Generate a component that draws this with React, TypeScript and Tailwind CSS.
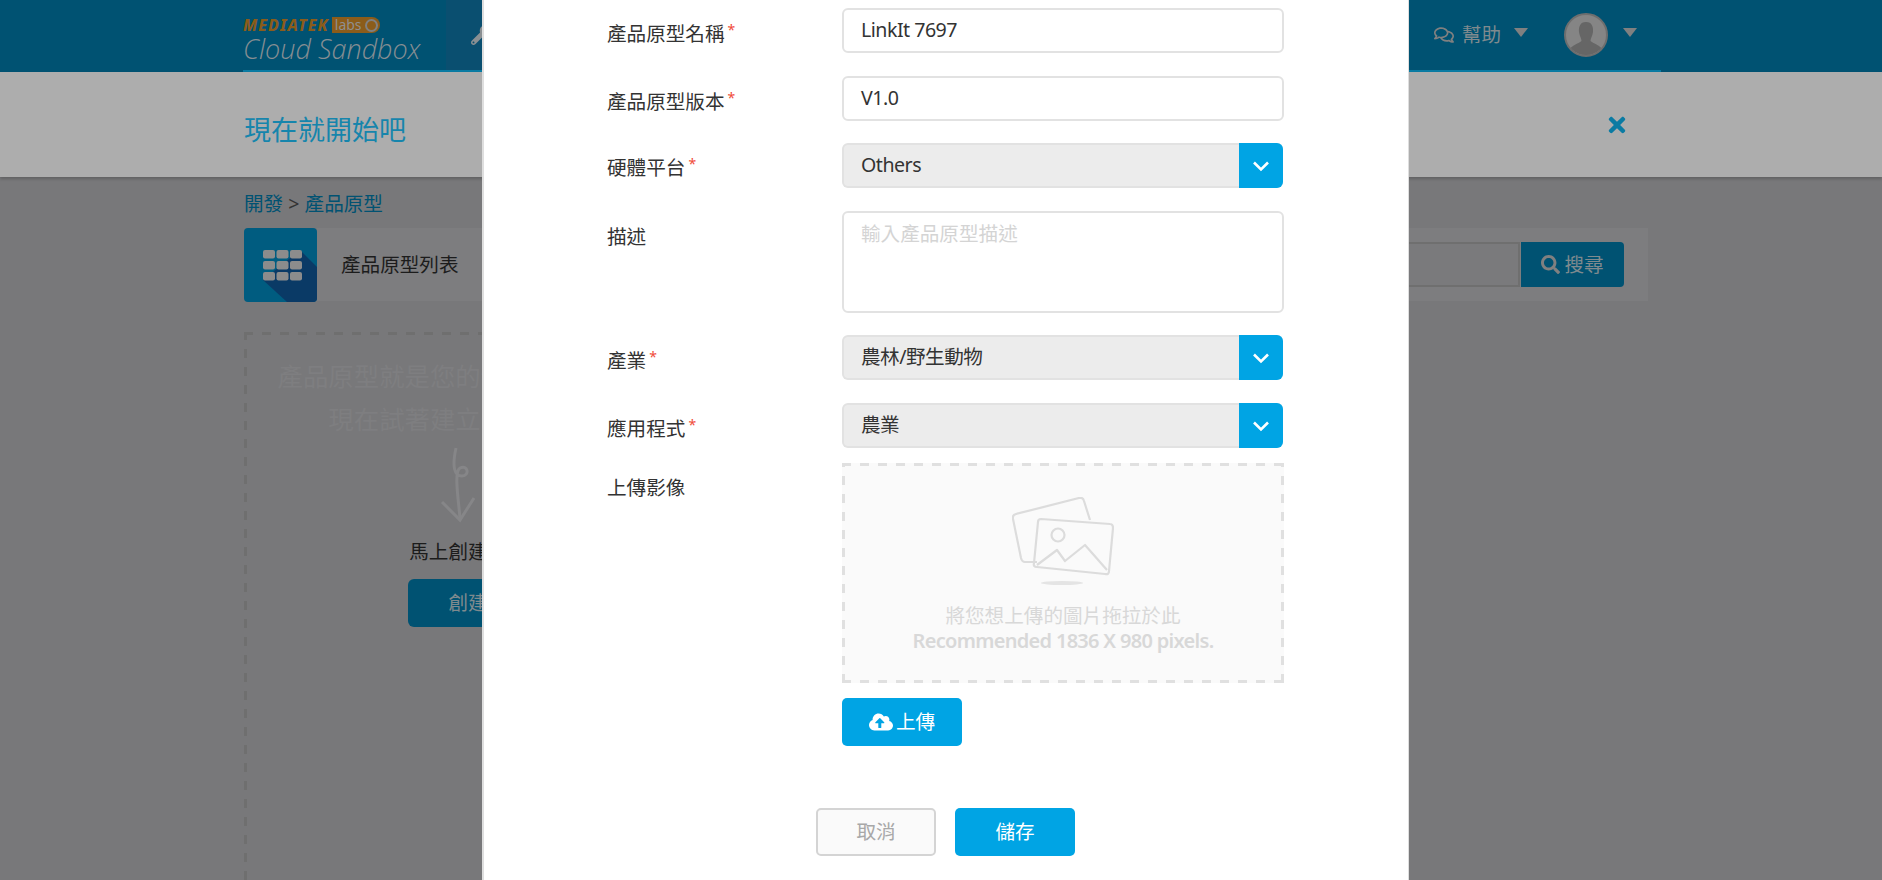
import { ReactNode } from "react";
import { FaCloudUploadAlt, FaRegComments, FaSearch, FaTimes, FaWrench } from "react-icons/fa";

const cjk = "font-['Noto_Sans','Noto_Sans_CJK_TC',sans-serif]";

// 3px strokes with a 9px dash, drawn on all four sides
const dashLight =
  "bg-no-repeat [background-image:repeating-linear-gradient(90deg,#e0e0e0_0_9px,transparent_9px_18px),repeating-linear-gradient(90deg,#e0e0e0_0_9px,transparent_9px_18px),repeating-linear-gradient(0deg,#e0e0e0_0_9px,transparent_9px_18px),repeating-linear-gradient(0deg,#e0e0e0_0_9px,transparent_9px_18px)] [background-size:100%_3px,100%_3px,3px_100%,3px_100%] [background-position:0_0,0_100%,0_0,100%_0]";
const dashDark =
  "bg-no-repeat [background-image:repeating-linear-gradient(90deg,#6f6f6f_0_9px,transparent_9px_18px),repeating-linear-gradient(0deg,#6f6f6f_0_9px,transparent_9px_18px)] [background-size:100%_3px,3px_100%] [background-position:0_0,0_0]";

function Caret() {
  return <span className="h-0 w-0 border-x-[7px] border-t-[9px] border-x-transparent border-t-[#808080]" />;
}

function Row({ label, required, top = "pt-[14px]", children }: { label: string; required?: boolean; top?: string; children: ReactNode }) {
  return (
    <div className="flex">
      <div className={`w-[235px] shrink-0 text-[19.6px] leading-[30px] text-[#333] ${top}`}>
        {label}
        {required && <span className="relative -top-[6px] ml-[3px] text-[14px] leading-[14px] text-[#f04b3a]">*</span>}
      </div>
      <div className="w-[442px]">{children}</div>
    </div>
  );
}

function TextField({ value }: { value: string }) {
  return (
    <div className="flex h-[45px] items-center rounded-[6px] border-2 border-[#e2e2e2] bg-white px-[17px] pb-[2px] text-[19.6px] tracking-[-0.5px] text-[#333]">
      {value}
    </div>
  );
}

function SelectField({ value }: { value: string }) {
  return (
    <div className="mr-[1px] flex h-[45px] items-stretch overflow-hidden rounded-[6px] bg-[#ececec] text-[19.6px] tracking-[-0.5px] text-[#333]">
      <div className="flex flex-1 items-center rounded-l-[6px] border-2 border-r-0 border-[#e2e2e2] px-[17px] pb-[2px]">{value}</div>
      <div className="flex w-[44px] items-center justify-center bg-[#00a4e4]">
        <svg width="18" height="12" viewBox="0 0 18 12" fill="none">
          <path d="M2 2.5 L9 9.5 L16 2.5" stroke="#fff" strokeWidth="2.6" />
        </svg>
      </div>
    </div>
  );
}

function PhotoIcon() {
  return (
    <svg width="102" height="90" viewBox="0 0 102 90" fill="none" stroke="#dcdcdc" strokeWidth="2.2" strokeLinejoin="round">
      <path d="M25 65 L13 65 Q10 65 9 61 L1 22 Q0 18 4 17 L67 1 Q71 0 72 4 L78 23" />
      <path d="M29 22 L98 27 Q101 27 101 31 L97 74 Q97 78 93 77 L25 70 Q21 70 22 66 L26 25 Q26 22 29 22 Z" />
      <circle cx="46" cy="38" r="6.5" />
      <path d="M25 68 L45 53 L53 64 L73 48 L95 73" />
      <ellipse cx="50" cy="86" rx="21" ry="2" fill="#e4e4e4" stroke="none" />
    </svg>
  );
}

function GridBadge() {
  return (
    <svg className="shrink-0" width="73" height="74" viewBox="0 0 73 74">
      <rect width="73" height="74" rx="4" fill="#005c80" />
      <path d="M56 22 L73 39 L73 70 Q73 74 69 74 L43 74 L19 52 Z" fill="#0a3a66" />
      {[19, 32.5, 46].map((x) =>
        [22, 33, 44].map((y) => <rect key={`${x}-${y}`} x={x} y={y} width="12" height="8.5" rx="2" fill="#8c8c8c" />),
      )}
    </svg>
  );
}

function Backdrop() {
  return (
    <div className="flex h-full flex-col bg-[#78787a]">
      <header className="h-[72px] shrink-0 bg-[#005272]">
        <div className="ml-[243px] flex h-[72px] w-[1418px] items-stretch border-b-2 border-[#0a7ba3]">
          <div className="flex w-[203px] flex-col pt-[17px]">
            <div className="flex h-[16px] items-center">
              <span className="text-[16px] leading-[16px] font-extrabold italic tracking-[1px] text-[#8b5c1a]">MEDIATEK</span>
              <span className="ml-[3px] flex h-[16px] items-center rounded-l-[2px] rounded-r-full bg-[#8b5c1a] pr-[2px] pl-[3px] text-[14px] leading-[16px] text-[#8f8f8f]">
                labs
                <span className="ml-[3px] h-[13px] w-[13px] rounded-full border-2 border-[#808080]" />
              </span>
            </div>
            <span className="font-['Open_Sans',sans-serif] text-[27px] leading-[31px] font-light italic text-[#868e92]">Cloud Sandbox</span>
          </div>
          <div className="flex w-[300px] items-center bg-[#0a4f70] pl-[25px]">
            <FaWrench className="text-[20px] text-[#8a8f92]" />
          </div>
          <div className="ml-auto flex items-center pr-[24px] text-[19.6px] text-[#7f8a8e]">
            <FaRegComments className="mr-[8px] text-[20px] text-[#808080]" />
            幫助
            <span className="mr-[36px] ml-[13px] -mt-[6px] flex"><Caret /></span>
            <div className="flex h-[44px] w-[44px] items-end justify-center overflow-hidden rounded-full border-2 border-[#6e6e6e] bg-[#858585]">
              <svg width="40" height="36" viewBox="0 0 40 36" fill="#666">
                <path d="M20 3 C26 3 27.5 8 27 13 C26.5 17 24.5 19 24.5 22 C28 25 34 26 37 31 L37 36 L3 36 L3 31 C6 26 12 25 15.5 22 C15.5 19 13.5 17 13 13 C12.5 8 14 3 20 3 Z" />
              </svg>
            </div>
            <span className="ml-[15px] -mt-[6px] flex"><Caret /></span>
          </div>
        </div>
      </header>

      <div className="flex h-[105px] shrink-0 items-center justify-between bg-[#adadad] pt-[10px] pr-[253px] pl-[244px] shadow-[0_2px_3px_rgba(0,0,0,0.2)]">
        <h1 className="text-[27px] leading-[34px] font-normal text-[#1685ac]">現在就開始吧</h1>
        <FaTimes className="-mt-[10px] text-[24px] text-[#0a7ba3]" />
      </div>

      <div className="flex flex-1 flex-col overflow-hidden pl-[244px]">
        <div className="mt-[13px] text-[19.6px] leading-[28px] text-[#333]">
          <span className="text-[#005272]">開發</span> &gt; <span className="text-[#005272]">產品原型</span>
        </div>
        <div className="mt-[10px] flex h-[73px] w-[1404px] items-stretch">
          <GridBadge />
          <div className="flex flex-1 items-center bg-[#7d7d7f] pr-[24px] pl-[24px]">
            <span className="text-[19.6px] text-[#1c1c1c]">產品原型列表</span>
            <div className="ml-auto flex h-[45px]">
              <div className="w-[200px] border-2 border-[#6f6f6f] bg-[#7a7a7c]" />
              <div className="ml-[1px] flex w-[103px] items-center justify-center gap-[4px] rounded-r-[4px] bg-[#005272] text-[19.6px] text-[#7f8a8e]">
                <FaSearch className="text-[19px] text-[#808080]" />
                搜尋
              </div>
            </div>
          </div>
        </div>

        <div className={`mt-[31px] flex w-[448px] flex-1 flex-col items-center pt-[23px] text-center ${dashDark}`}>
          <p className="text-[25.4px] leading-[43px] whitespace-nowrap text-[#7e7e80]">產品原型就是您的物聯網裝置專案</p>
          <p className="text-[25.4px] leading-[43px] whitespace-nowrap text-[#7e7e80]">現在試著建立一個原型！</p>
          <svg className="mt-[5px]" width="60" height="78" viewBox="0 0 60 78" fill="none" stroke="#868688" strokeWidth="3">
            <path d="M18 2 C14 20 16 30 24 30 C32 30 30 18 22 22 C16 26 20 50 22 72" />
            <path d="M4 56 L22 74 L36 52" />
          </svg>
          <p className="mt-[13px] text-[19.6px] leading-[30px] text-[#1c1c1c]">馬上創建原型</p>
          <div className="mt-[12px] flex h-[48px] w-[120px] items-center justify-center rounded-[6px] bg-[#005272] text-[19.6px] text-[#7f8a8e]">
            創建
          </div>
        </div>
      </div>
    </div>
  );
}

function Modal() {
  return (
    <div className="absolute inset-0 flex justify-center overflow-hidden pl-[9px]">
      <div className="flex h-full w-[927px] flex-col border-r border-l-2 border-[#dedede] bg-white pt-[8px] pl-[123px]">
        <Row label="產品原型名稱" required top="pt-[11px]">
          <TextField value="LinkIt 7697" />
        </Row>
        <div className="mt-[23px]">
          <Row label="產品原型版本" required top="pt-[11px]">
            <TextField value="V1.0" />
          </Row>
        </div>
        <div className="mt-[22px]">
          <Row label="硬體平台" required top="pt-[10px]">
            <SelectField value="Others" />
          </Row>
        </div>
        <div className="mt-[23px]">
          <Row label="描述" top="pt-[11px]">
            <div className="h-[102px] rounded-[6px] border-2 border-[#e2e2e2] bg-white px-[17px] pt-[6px] text-[19.6px] leading-[30px] text-[#d4d4d4]">
              輸入產品原型描述
            </div>
          </Row>
        </div>
        <div className="mt-[22px]">
          <Row label="產業" required top="pt-[11px]">
            <SelectField value="農林/野生動物" />
          </Row>
        </div>
        <div className="mt-[23px]">
          <Row label="應用程式" required top="pt-[11px]">
            <SelectField value="農業" />
          </Row>
        </div>
        <div className="mt-[15px]">
          <Row label="上傳影像" top="pt-[10px]">
            <div className={`flex h-[220px] flex-col items-center bg-[#fafafa] pt-[34px] ${dashLight}`}>
              <PhotoIcon />
              <p className="mt-[16px] text-[19.6px] leading-[26px] text-[#d8d8d8]">將您想上傳的圖片拖拉於此</p>
              <p className="text-[20px] leading-[24px] font-semibold tracking-[-0.7px] text-[#d8d8d8]">Recommended 1836 X 980 pixels.</p>
            </div>
            <button className="mt-[15px] flex h-[48px] w-[120px] items-center justify-center gap-[3px] rounded-[5px] bg-[#00a4e4] text-[19.6px] text-white">
              <FaCloudUploadAlt className="text-[24px]" />
              上傳
            </button>
          </Row>
        </div>
        <div className="mt-[62px] -ml-[124px] flex justify-center gap-[19px]">
          <button className="h-[48px] w-[120px] rounded-[5px] border-2 border-[#d4d4d4] bg-[#fafafa] text-[19.6px] text-[#a8a8a8]">取消</button>
          <button className="h-[48px] w-[120px] rounded-[5px] bg-[#00a4e4] text-[19.6px] text-white">儲存</button>
        </div>
      </div>
    </div>
  );
}

export default function App() {
  return (
    <div className={`relative h-[880px] w-[1882px] overflow-hidden ${cjk}`}>
      <Backdrop />
      <Modal />
    </div>
  );
}
